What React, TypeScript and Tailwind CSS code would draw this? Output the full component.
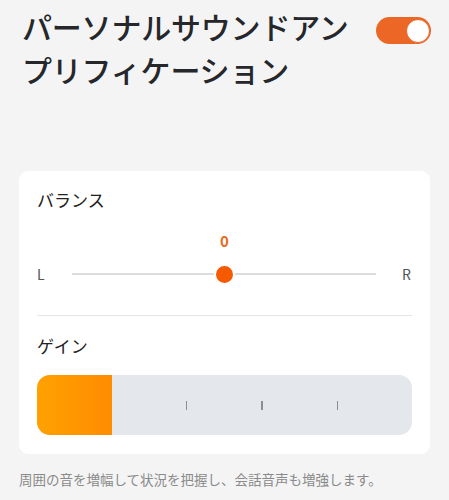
export default function App() {
  const font = { fontFamily: '"Noto Sans CJK JP", "Noto Sans", sans-serif' }

  return (
    <main className="min-h-screen w-full bg-[#f4f4f4] text-[#222]" style={font}>
      {/* Header */}
      <header className="flex items-start justify-between pl-[22px] pr-[18px] pt-[5px]">
        <h1 className="w-[340px] text-[30px] font-medium leading-[43px] tracking-[-0.2px] text-[#25272b]">
          パーソナルサウンドアンプリフィケーション
        </h1>
        <button className="mt-[12px] flex h-[27px] w-[55px] items-center justify-end rounded-full bg-[#ec6725] px-[1px]">
          <span className="h-[24px] w-[24px] rounded-full border border-[#e8622a] bg-white" />
        </button>
      </header>

      {/* Settings card */}
      <section className="mx-[19px] mt-[80px] rounded-[9px] bg-white px-[18px] pb-[19px] pt-[17px]">
        <h2 className="text-[17px] leading-[24px] text-[#222]">バランス</h2>

        <div className="mt-[20px] text-center text-[15px] font-bold leading-[18px] text-[#ea6a1e]">0</div>

        <div className="mt-[13px] flex h-[22px] items-center">
          <span className="w-[10px] text-[14px] leading-none text-[#555]">L</span>
          <div className="ml-[25px] mr-[26px] flex flex-1 items-center">
            <div className="h-[2px] flex-1 bg-[#dcdcdc]" />
            <div className="h-[21px] w-[21px] rounded-full border-[2px] border-white bg-[#f55a00]" />
            <div className="h-[2px] flex-1 bg-[#dcdcdc]" />
          </div>
          <span className="w-[10px] text-[14px] leading-none text-[#555]">R</span>
        </div>

        <div className="mt-[30px] h-px bg-[#e6e6e6]" />

        <h2 className="mt-[18px] text-[17px] leading-[24px] text-[#222]">ゲイン</h2>

        <div className="mt-[17px] flex h-[60px] overflow-hidden rounded-[13px] bg-[#e4e8ec]">
          <div className="w-1/5 bg-gradient-to-r from-[#ffa100] to-[#ff8c00]" />
          <div className="flex flex-1 items-center justify-evenly">
            <span className="h-[9px] w-[1.5px] bg-[#8a8f95]" />
            <span className="h-[9px] w-[1.5px] bg-[#8a8f95]" />
            <span className="h-[9px] w-[1.5px] bg-[#8a8f95]" />
          </div>
        </div>
      </section>

      <p className="mx-[19px] mt-[15px] text-[13.5px] leading-[20px] text-[#8a8a8a]">
        周囲の音を増幅して状況を把握し、会話音声も増強します。
      </p>
    </main>
  )
}
